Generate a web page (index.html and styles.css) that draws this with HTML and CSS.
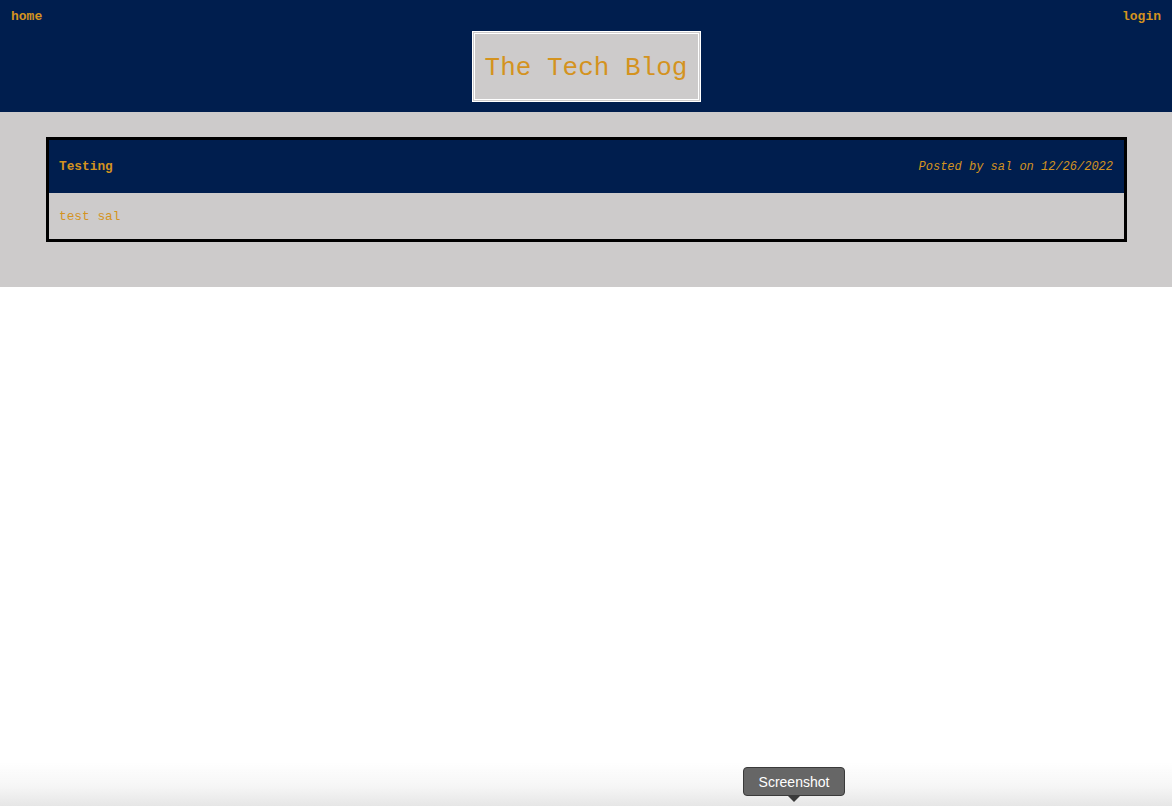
FILE: index.html
```
<!DOCTYPE html>
<html lang="en">
<head>
<meta charset="utf-8">
<title>The Tech Blog</title>
<link rel="stylesheet" href="styles.css">
</head>
<body>
<header class="site-header">
  <nav class="nav">
    <a class="nav-link" href="#">home</a>
    <a class="nav-link" href="#">login</a>
  </nav>
  <div class="title-wrap">
    <h1 class="title">The Tech Blog</h1>
  </div>
</header>
<main class="main">
  <article class="post">
    <div class="post-head">
      <span class="post-title">Testing</span>
      <span class="post-meta">Posted by sal on 12/26/2022</span>
    </div>
    <div class="post-body">test sal</div>
  </article>
</main>
<div class="dock-shade"></div>
<div class="tooltip">Screenshot</div>
</body>
</html>
```
FILE: styles.css
```
html, body {
  margin: 0;
  padding: 0;
  background: #ffffff;
  font-family: "Liberation Mono", "Courier New", monospace;
  color: #d4931f;
}
.site-header {
  background: #001e4e;
  padding: 9px 11px 10px 11px;
  height: 112px;
  box-sizing: border-box;
}
.nav {
  display: flex;
  justify-content: space-between;
  height: 15px;
}
.nav-link {
  color: #d4931f;
  font-weight: bold;
  font-size: 13px;
  line-height: 15px;
  text-decoration: none;
}
.title-wrap {
  display: flex;
  justify-content: center;
  margin-top: 7px;
}
.title {
  margin: 0;
  background: #cdcbcb;
  border: 3px double #ffffff;
  padding: 3px 10px 0 10px;
  font-size: 26px;
  line-height: 31px;
  font-weight: normal;
  color: #d4931f;
  width: 229px;
  height: 71px;
  box-sizing: border-box;
  white-space: nowrap;
  display: flex;
  align-items: center;
  justify-content: center;
}
.main {
  background: #cdcbcb;
  padding: 25px 45px 45px 46px;
}
.post {
  border: 3px solid #000000;
}
.post-head {
  background: #001e4e;
  height: 53px;
  padding: 0 11px 0 10px;
  display: flex;
  align-items: center;
  justify-content: space-between;
}
.post-title {
  font-weight: bold;
  font-size: 12.8px;
}
.post-meta {
  font-style: italic;
  font-size: 12px;
}
.post-body {
  background: #cdcbcb;
  height: 46px;
  box-sizing: border-box;
  padding: 1px 10px 0 10px;
  display: flex;
  align-items: center;
  font-size: 12.8px;
}
.dock-shade {
  position: fixed;
  left: 0;
  right: 0;
  bottom: 0;
  height: 44px;
  background: linear-gradient(to bottom, rgba(255,255,255,0) 0%, #f6f6f6 55%, #e6e6e6 100%);
  pointer-events: none;
}
.tooltip {
  position: fixed;
  left: 743px;
  top: 767px;
  width: 102px;
  height: 29px;
  box-sizing: border-box;
  background: #666666;
  border: 1px solid #3a3a3a;
  border-radius: 4px;
  color: #ffffff;
  font-family: "Liberation Sans", Arial, sans-serif;
  font-size: 14px;
  display: flex;
  align-items: center;
  justify-content: center;
}
.tooltip::after {
  content: "";
  position: absolute;
  left: 44px;
  bottom: -7px;
  border-left: 6px solid transparent;
  border-right: 6px solid transparent;
  border-top: 6px solid #3a3a3a;
}
```
